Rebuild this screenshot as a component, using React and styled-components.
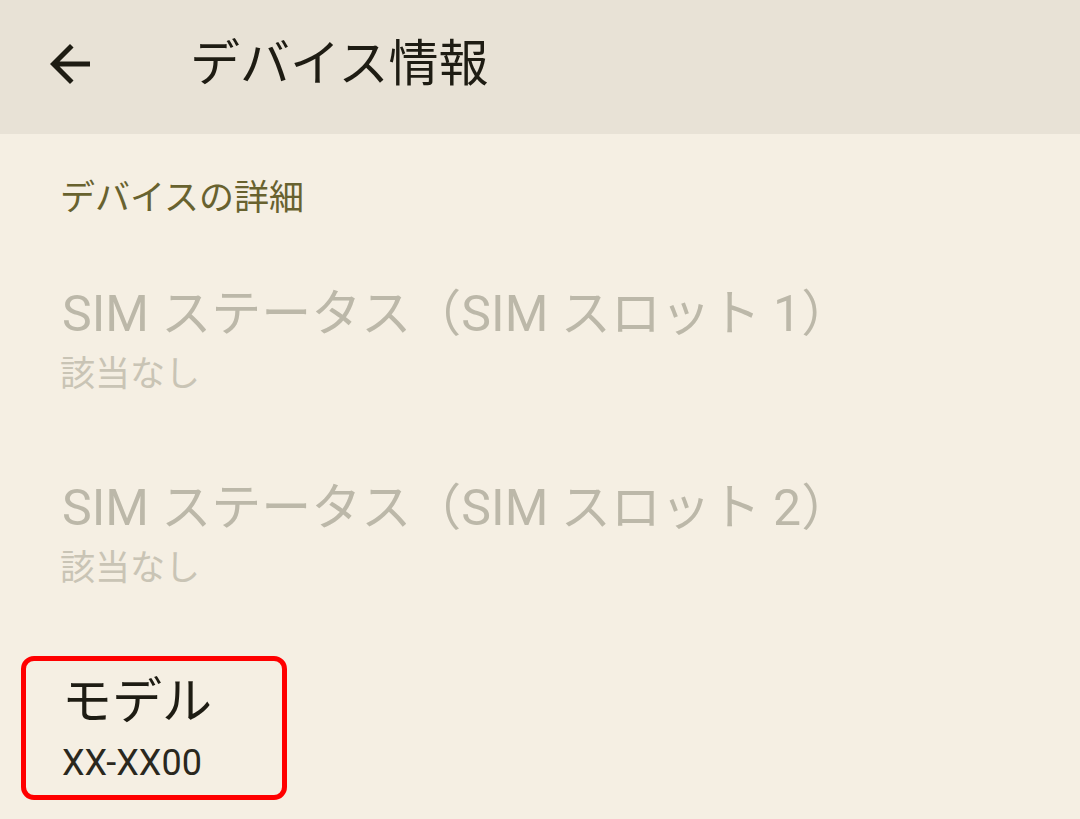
import React from "react";
import styled, { createGlobalStyle } from "styled-components";

const GlobalStyle = createGlobalStyle`
    html, body {
        margin: 0;
        padding: 0;
        background: #f5efe3;
    }
    body {
        font-family: Roboto, "Noto Sans CJK JP", sans-serif;
    }
`;

const Screen = styled.div`
    width: 1080px;
    height: 819px;
    overflow: hidden;
    background: #f5efe3;
`;

const Toolbar = styled.header`
    height: 134px;
    box-sizing: border-box;
    padding-bottom: 6px;
    background: #e8e2d6;
    display: flex;
    align-items: center;
`;

const BackButton = styled.button`
    width: 60px;
    height: 60px;
    margin-left: 40px;
    padding: 0;
    border: none;
    background: transparent;
    display: flex;
    align-items: center;
    justify-content: center;
    color: #1e1c13;
`;

const ToolbarTitle = styled.h1`
    margin: 0 0 0 90px;
    font-size: 50px;
    font-weight: 400;
    color: #1e1c13;
    line-height: 64px;
`;

const Category = styled.div`
    padding: 41px 0 21px 60px;
    font-size: 35px;
    line-height: 48px;
    color: #68622f;
`;

const Item = styled.div`
    padding: 36px 0 36px 62px;
`;

const Title = styled.div`
    font-size: 50px;
    line-height: 68px;
    color: ${props => (props.disabled ? "#bcb8a9" : "#1e1c13")};
    white-space: nowrap;
`;

const Summary = styled.div`
    font-size: ${props => (props.disabled ? "35px" : "36px")};
    margin-left: ${props => (props.disabled ? "-2px" : "0")};
    line-height: 54px;
    color: ${props => (props.disabled ? "#c9c4b5" : "#2a281e")};
`;

const HighlightRow = styled.div`
    padding-top: 24px;
    padding-left: 21px;
`;

const Highlight = styled.div`
    width: 266px;
    box-sizing: border-box;
    border: 5px solid #ff0000;
    border-radius: 13px;
    padding: 7px 0 5px 36px;
`;

const ArrowBack = () => (
    <svg width="60" height="60" viewBox="0 0 24 24" fill="currentColor">
        <path d="M20 11H7.83l5.59-5.59L12 4l-8 8 8 8 1.41-1.41L7.83 13H20v-2z" />
    </svg>
);

const rows = [
    { title: "SIM ステータス（SIM スロット 1）", summary: "該当なし" },
    { title: "SIM ステータス（SIM スロット 2）", summary: "該当なし" },
];

const App = () => (
    <>
        <GlobalStyle />
        <Screen>
            <Toolbar>
                <BackButton aria-label="戻る">
                    <ArrowBack />
                </BackButton>
                <ToolbarTitle>デバイス情報</ToolbarTitle>
            </Toolbar>
            <Category>デバイスの詳細</Category>
            {rows.map(row => (
                <Item key={row.title}>
                    <Title disabled>{row.title}</Title>
                    <Summary disabled>{row.summary}</Summary>
                </Item>
            ))}
            <HighlightRow>
                <Highlight>
                    <Title>モデル</Title>
                    <Summary>XX-XX00</Summary>
                </Highlight>
            </HighlightRow>
        </Screen>
    </>
);

export default App;
